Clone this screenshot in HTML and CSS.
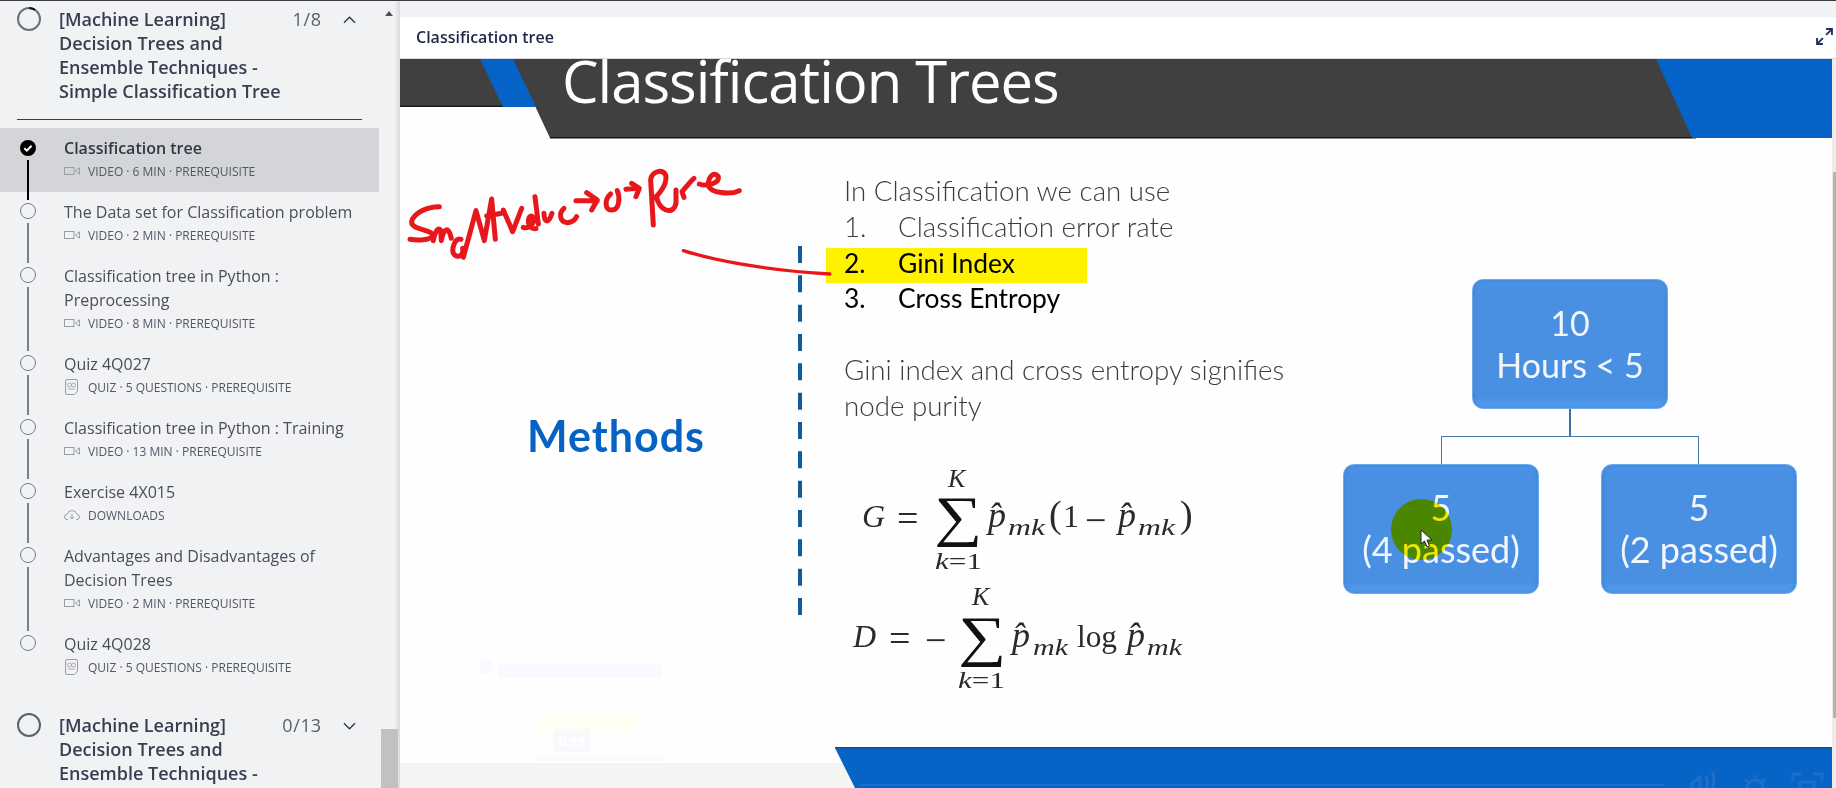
FILE: index.html
```html
<!DOCTYPE html>
<html lang="en">
<head>
<meta charset="utf-8">
<title>Classification tree</title>
<link rel="stylesheet" href="styles.css">
</head>
<body>
<div class="page">
  <aside class="sidebar">
    <div class="outline">
      <section class="module module-first">
        <header class="module-head">
          <svg class="ring" viewBox="0 0 24 24"><circle cx="12" cy="12" r="11" fill="none" stroke="#6d7080" stroke-width="2"/><path d="M12 1a11 11 0 0 1 6 1.8" fill="none" stroke="#111" stroke-width="2"/></svg>
          <h2 class="module-title">[Machine Learning] Decision Trees and Ensemble Techniques - Simple Classification Tree</h2>
          <span class="module-count">1 / 8</span>
          <svg class="chev" viewBox="0 0 14 8"><path d="M1 7l6-6 6 6" fill="none" stroke="#333645" stroke-width="1.4"/></svg>
        </header>
        <hr class="module-rule">
        <ul class="items">
          <li class="item item-active">
            <div class="marker"><svg class="dot-done" viewBox="0 0 16 16"><circle cx="8" cy="8" r="8" fill="#000"/><path d="M4.3 8.3l2.5 2.4 4.8-5" fill="none" stroke="#fff" stroke-width="2"/></svg><i class="rail rail-done"></i></div>
            <div class="body"><div class="name">Classification tree</div><div class="meta"><svg class="mi" viewBox="0 0 16 8"><use href="#i-video"/></svg><span>Video · 6 min · Prerequisite</span></div></div>
          </li>
          <li class="item">
            <div class="marker"><i class="dot"></i><i class="rail"></i></div>
            <div class="body"><div class="name">The Data set for Classification problem</div><div class="meta"><svg class="mi" viewBox="0 0 16 8"><use href="#i-video"/></svg><span>Video · 2 min · Prerequisite</span></div></div>
          </li>
          <li class="item">
            <div class="marker"><i class="dot"></i><i class="rail"></i></div>
            <div class="body"><div class="name">Classification tree in Python : Preprocessing</div><div class="meta"><svg class="mi" viewBox="0 0 16 8"><use href="#i-video"/></svg><span>Video · 8 min · Prerequisite</span></div></div>
          </li>
          <li class="item">
            <div class="marker"><i class="dot"></i><i class="rail"></i></div>
            <div class="body"><div class="name">Quiz 4Q027</div><div class="meta"><svg class="mi mi-quiz" viewBox="0 0 13 16"><use href="#i-quiz"/></svg><span>Quiz · 5 questions · Prerequisite</span></div></div>
          </li>
          <li class="item">
            <div class="marker"><i class="dot"></i><i class="rail"></i></div>
            <div class="body"><div class="name">Classification tree in Python : Training</div><div class="meta"><svg class="mi" viewBox="0 0 16 8"><use href="#i-video"/></svg><span>Video · 13 min · Prerequisite</span></div></div>
          </li>
          <li class="item">
            <div class="marker"><i class="dot"></i><i class="rail"></i></div>
            <div class="body"><div class="name">Exercise 4X015</div><div class="meta"><svg class="mi mi-cloud" viewBox="0 0 16 10"><use href="#i-cloud"/></svg><span>Downloads</span></div></div>
          </li>
          <li class="item">
            <div class="marker"><i class="dot"></i><i class="rail"></i></div>
            <div class="body"><div class="name">Advantages and Disadvantages of Decision Trees</div><div class="meta"><svg class="mi" viewBox="0 0 16 8"><use href="#i-video"/></svg><span>Video · 2 min · Prerequisite</span></div></div>
          </li>
          <li class="item">
            <div class="marker"><i class="dot"></i></div>
            <div class="body"><div class="name">Quiz 4Q028</div><div class="meta"><svg class="mi mi-quiz" viewBox="0 0 13 16"><use href="#i-quiz"/></svg><span>Quiz · 5 questions · Prerequisite</span></div></div>
          </li>
        </ul>
      </section>
      <section class="module">
        <header class="module-head">
          <svg class="ring" viewBox="0 0 24 24"><circle cx="12" cy="12" r="11" fill="none" stroke="#5c5f6e" stroke-width="2"/></svg>
          <h2 class="module-title">[Machine Learning] Decision Trees and Ensemble Techniques - Simple Classification Tree</h2>
          <span class="module-count">0 / 13</span>
          <svg class="chev" viewBox="0 0 14 8"><path d="M1 1l6 6 6-6" fill="none" stroke="#333645" stroke-width="1.4"/></svg>
        </header>
      </section>
    </div>
    <div class="scrollbar"><i class="scroll-up"></i><i class="scroll-thumb"></i></div>
  </aside>

  <main class="viewer">
    <header class="viewer-head">
      <span class="viewer-title">Classification tree</span>
      <svg class="expand" viewBox="0 0 16 16"><path d="M1 15l5.5-5.5M1 9.5V15h5.5" fill="none" stroke="#24305e" stroke-width="1.8"/><path d="M15 1L9.5 6.5M9.5 1H15v5.5" fill="none" stroke="#24305e" stroke-width="1.8"/></svg>
    </header>
    <div class="stage">
      <div class="slide">
        <svg class="art" viewBox="400 59 1432 729">
          <polygon points="400,59 1660,59 1696,138 550,138 535,106 400,106" fill="#404040"/>
          <rect x="400" y="105.500" width="103" height="1.500" fill="#1c1c1c"/>
          <rect x="550" y="137" width="1146" height="1.500" fill="#151515"/>
          <polygon points="480,59 513,59 536,107 503,107" fill="#0563c8"/>
          <polygon points="1656,59 1832,59 1832,138 1692,138" fill="#0563c8"/>
          <rect x="400" y="763" width="460" height="25" fill="#f4f4f2"/>
          <polygon points="835,748 1832,748 1832,788 855,788" fill="#0664c6"/>
          <rect x="835" y="747" width="997" height="1.500" fill="#0d4f9f"/>
          <rect x="860" y="784" width="805" height="2" fill="#1a6fca"/>
          <g fill="none" stroke="#1c70c9" stroke-width="3">
            <path d="M1692 788v-5l8-6v11M1706 776q3 6 0 12M1712 772q4 8 0 16"/>
            <circle cx="1755" cy="788" r="8"/>
            <path d="M1755 775v3M1745 779l3 3M1765 779l-3 3"/>
            <path d="M1793 781v-7h8M1813 774h9v7M1800 788v-6h14v6"/>
          </g>
          <rect x="498" y="664" width="164" height="14" fill="#f8faff"/>
          <rect x="480" y="660" width="12" height="14" fill="#f8faff"/>
          <rect x="537" y="716" width="99" height="15" fill="#fffff4"/>
          <rect x="553" y="729" width="37" height="23" fill="#f8f9fc"/>
          <rect x="537" y="756" width="125" height="5" fill="#f8faff"/>
          <text class="ghost" x="559" y="746">0:19</text>

          <rect x="826" y="248" width="261" height="35" fill="#fff200"/>
          <line class="dash" x1="800" y1="246" x2="800" y2="615"/>

          <g class="eq">
            <text x="862" y="527">G</text>
            <text class="rel" x="897" y="531">=</text>
            <text class="sum" x="934" y="535" textLength="48" lengthAdjust="spacingAndGlyphs">∑</text>
            <text class="lim lim-k" x="948" y="487">K</text>
            <text class="lim" x="935" y="569" textLength="47" lengthAdjust="spacingAndGlyphs">k<tspan class="up">=1</tspan></text>
            <text class="p" x="988" y="527">p̂</text>
            <text class="sub" x="1008" y="535" textLength="37" lengthAdjust="spacingAndGlyphs">mk</text>
            <text class="up big" x="1049" y="527">(</text>
            <text class="up" x="1063" y="527">1</text>
            <text class="rel" x="1085" y="533">−</text>
            <text class="p" x="1118" y="527">p̂</text>
            <text class="sub" x="1138" y="535" textLength="37" lengthAdjust="spacingAndGlyphs">mk</text>
            <text class="up big" x="1180" y="527">)</text>

            <text x="853" y="647">D</text>
            <text class="rel" x="889" y="651">=</text>
            <text class="rel" x="925" y="653">−</text>
            <text class="sum" x="958" y="655" textLength="48" lengthAdjust="spacingAndGlyphs">∑</text>
            <text class="lim lim-k" x="972" y="605">K</text>
            <text class="lim" x="958" y="688" textLength="47" lengthAdjust="spacingAndGlyphs">k<tspan class="up">=1</tspan></text>
            <text class="p" x="1012" y="647">p̂</text>
            <text class="sub" x="1033" y="655" textLength="35" lengthAdjust="spacingAndGlyphs">mk</text>
            <text class="up" x="1077" y="647" textLength="40" lengthAdjust="spacingAndGlyphs">log</text>
            <text class="p" x="1127" y="647">p̂</text>
            <text class="sub" x="1147" y="655" textLength="35" lengthAdjust="spacingAndGlyphs">mk</text>
          </g>

          <g class="ink" transform="translate(390 0) scale(.3333)">
            <path d="M148 620C110 620 70 640 65 665C62 690 125 688 128 705C125 722 80 722 60 718"/>
            <path d="M130 722C134 700 142 680 152 690L154 722C160 690 174 672 184 715"/>
            <path d="M213 718C195 712 185 745 190 760C200 775 222 770 218 745M220 772L258 632L283 722L305 597L316 718"/>
            <path d="M290 648L335 640M340 630L368 695L395 625"/>
            <path d="M400 682C420 690 442 660 425 648C410 648 410 690 438 686M435 590L445 672M462 640C462 665 475 675 486 640"/>
            <path d="M522 625C505 640 510 665 530 668C545 668 555 660 560 650"/>
            <path d="M558 602L622 602M590 578L622 600L605 630"/>
            <path d="M662 582C642 600 645 632 665 630C690 630 690 590 682 572"/>
            <path d="M708 568L745 565M725 550L748 565L738 590"/>
            <path d="M790 675L782 540C785 510 825 505 828 530C830 560 800 590 790 595"/>
            <path d="M800 590C805 630 850 650 858 610L858 570"/>
            <path d="M882 592L876 575C890 560 900 545 912 535"/>
            <path d="M928 552C950 560 990 550 985 530C975 515 955 525 955 555C960 580 1020 585 1048 572"/>
            <path class="ink-line" d="M880 752C1000 790 1180 815 1320 822"/>
          </g>
        </svg>

        <h1 class="slide-title">Classification Trees</h1>
        <div class="methods">Methods</div>

        <div class="points">
          <p>In Classification we can use</p>
          <p class="num"><span>1.</span><span>Classification error rate</span></p>
          <p class="num strong"><span>2.</span><span>Gini Index</span></p>
          <p class="num strong"><span>3.</span><span>Cross Entropy</span></p>
          <p class="spacer">&nbsp;</p>
          <p>Gini index and cross entropy signifies</p>
          <p>node purity</p>
        </div>

        <div class="tree">
          <div class="node node-top"><span>10</span><span>Hours &lt; 5</span></div>
          <i class="link link-stem"></i>
          <i class="link link-bar"></i>
          <div class="node node-left"><span>5</span><span>(4 passed)</span></div>
          <div class="node node-right"><span>5</span><span>(2 passed)</span></div>
          <i class="pointer-glow"></i>
          <svg class="pointer" viewBox="0 0 13 19"><path d="M1 1v14l3.500-3 2.500 6 2.500-1-2.500-6h5z" fill="#fff" stroke="#222" stroke-width="1"/></svg>
        </div>
      </div>
      <div class="page-scroll"><i></i></div>
    </div>
  </main>
</div>

<svg class="defs" aria-hidden="true">
  <symbol id="i-video" viewBox="0 0 16 8"><rect x=".5" y=".5" width="9.500" height="7" fill="none" stroke="#9a9ca8"/><path d="M15.500 .8L11.500 4l4 3.200z" fill="none" stroke="#9a9ca8"/></symbol>
  <symbol id="i-quiz" viewBox="0 0 13 16"><path d="M2 .5h9q1.500 0 1.500 1.500v10l-3 3.500H2q-1.500 0-1.500-1.500V2Q.5.500 2 .5z" fill="none" stroke="#9a9ca8"/><circle cx="4.500" cy="6" r="2" fill="none" stroke="#9a9ca8" stroke-width=".8"/><circle cx="8.500" cy="6" r="2" fill="none" stroke="#9a9ca8" stroke-width=".8"/><path d="M3 10h7" stroke="#9a9ca8" stroke-width=".8"/></symbol>
  <symbol id="i-cloud" viewBox="0 0 16 10"><path d="M4 9.500H3Q.5 9.500.5 7T3 4.500Q4 .5 8 .5t5 4q2.500.3 2.500 2.500T13 9.500h-1" fill="none" stroke="#9a9ca8"/><path d="M8 4v5M6 7l2 2 2-2" fill="none" stroke="#9a9ca8"/></symbol>
</svg>
</body>
</html>
```

FILE: styles.css
```css
* { box-sizing: border-box; }
html, body { margin: 0; height: 788px; overflow: hidden; }
body { background: #f1f2f4; font-family: "Open Sans", sans-serif; color: #373a45; }
h1, h2, p, ul { margin: 0; padding: 0; }
ul { list-style: none; }
i { display: block; }
.defs { position: absolute; width: 0; height: 0; }

.page { display: flex; height: 788px; border-top: 1px solid #3a3c42; }

/* sidebar */
.sidebar { display: flex; flex: 0 0 400px; height: 787px; overflow: hidden; }
.outline { flex: 0 0 379px; height: 787px; overflow: hidden; }
.module-head { display: flex; align-items: flex-start; padding: 6px 0 0 17px; }
.module + .module .module-head { padding-top: 25px; }
.ring { flex: none; width: 24px; height: 24px; }
.module-title { flex: none; width: 228px; margin-left: 18px; font-size: 18px; line-height: 24px; font-weight: 600; color: #3a3d4f; }
.module-count { flex: none; display: flex; justify-content: flex-end; width: 34px; font-size: 18px; line-height: 24px; color: #5a5d6b; white-space: pre; word-spacing: -4px; }
.chev { flex: none; width: 13px; height: 8px; margin: 9px 0 0 22px; }
.module-rule { margin: 16px 17px 8px 17px; height: 1px; border: 0; background: #3d3f4a; }

.item { display: flex; padding: 7px 0 9px 20px; }
.item-active { background: #d4d5d8; }
.marker { flex: none; display: flex; flex-direction: column; align-items: center; width: 16px; margin: 4px 0 -16px; }
.item-active .marker { margin-top: 5px; margin-bottom: -17px; }
.dot { flex: none; width: 16px; height: 16px; border: 1.5px solid #777988; border-radius: 50%; }
.dot-done { flex: none; width: 16px; height: 16px; }
.rail { flex: 1; width: 2px; margin-top: 4px; background: #7c7e8e; }
.rail-done { background: #000; }
.body { margin-left: 28px; min-width: 0; padding-top: 1px; }
.name { width: 300px; font-size: 16px; line-height: 24px; color: #4b4d5a; }
.item-active .name { font-weight: 600; color: #333745; }
.meta { display: flex; align-items: center; height: 24px; margin-top: -1px; font-size: 12px; text-transform: uppercase; color: #545664; }
.mi { flex: none; width: 16px; height: 8px; margin-right: 8px; }
.mi-quiz { width: 13px; height: 16px; margin: 0 10px 0 1px; }
.mi-cloud { height: 10px; }

.scrollbar { position: relative; flex: 0 0 21px; height: 787px; background: linear-gradient(90deg, #f1f2f4 15px, #dadada 21px); }
.scroll-up { position: absolute; left: 6px; top: 10px; width: 0; height: 0; border: 4.5px solid transparent; border-top: 0; border-bottom: 5px solid #505050; }
.scroll-thumb { position: absolute; left: 2px; width: 17px; bottom: 0; height: 59px; background: #c1c1c1; }

/* viewer */
.viewer { flex: 1; display: flex; flex-direction: column; min-width: 0; padding-top: 16px; }
.viewer-head { flex: 0 0 42px; display: flex; align-items: center; justify-content: space-between; padding: 0 3px 2px 16px; background: #fff; border-bottom: 1px solid #d8d9e0; }
.viewer-title { font-size: 16px; font-weight: 600; color: #1f2748; }
.expand { width: 17px; height: 17px; }
.stage { flex: 1; display: flex; min-height: 0; }
.slide { position: relative; flex: 1; overflow: hidden; background: #fefefe; }
.page-scroll { flex: 0 0 4px; padding-top: 113px; background: #ececec; }
.page-scroll i { width: 3px; height: 546px; margin-left: 1px; background: #b3b3b3; }

.art { position: absolute; left: 0; top: 0; width: 1432px; height: 729px; }
.dash { stroke: #0f5c9c; stroke-width: 4; stroke-dasharray: 17 12.330; }
.ghost { font: 700 13px "Open Sans", sans-serif; fill: #fff; }
.eq text { font-family: "Liberation Serif", serif; font-size: 32px; font-style: italic; fill: #2a2a2a; }
.eq .up { font-style: normal; }
.eq .big { font-size: 38px; }
.eq .rel { font-size: 38px; font-style: normal; }
.eq .p { font-size: 36px; }
.eq .sub { font-size: 23px; }
.eq .lim { font-size: 24px; }
.eq .lim-k { font-size: 26px; }
.eq .sum { font-size: 56px; font-style: normal; fill: #111; }
.ink path { fill: none; stroke: #e8171c; stroke-width: 15; stroke-linecap: round; stroke-linejoin: round; }
.ink .ink-line { stroke-width: 10; }

.slide-title { position: absolute; left: 162px; top: 0; font-family: "Open Sans", sans-serif; font-size: 58px; line-height: 44px; font-weight: 400; letter-spacing: -1px; color: #fff; white-space: nowrap; }
.methods { position: absolute; left: 127px; top: 352px; font-family: Lato, sans-serif; font-size: 43px; line-height: 50px; font-weight: 700; letter-spacing: 1px; color: #0663c4; }
.points { position: absolute; left: 444px; top: 114px; width: 460px; font-family: Lato, sans-serif; font-size: 27.700px; line-height: 35.750px; font-weight: 300; color: #3c3c3c; }
.num { display: grid; grid-template-columns: 54px 1fr; }
.strong { font-size: 26.400px; font-weight: 400; color: #000; transform: translateY(1px); }

.node { position: absolute; display: flex; flex-direction: column; align-items: center; justify-content: center; width: 196px; height: 130px; border: 1px solid #6ea9ee; border-radius: 11px; background: linear-gradient(180deg, #4a95ea 0, #4a90e2 10px, #4a90e2 117px, #52a0f6 100%); box-shadow: inset 0 0 5px #3f82d0; font-family: Lato, sans-serif; font-size: 34px; line-height: 42px; color: #f2f7fd; }
.node-top { left: 1072px; top: 220px; }
.node-left { left: 943px; top: 405px; padding-bottom: 2px; font-size: 36px; }
.node-right { left: 1201px; top: 405px; padding-bottom: 2px; font-size: 36px; }
.link { position: absolute; background: #3f6fa6; }
.link-stem { left: 1169px; top: 350px; width: 2px; height: 28px; }
.link-bar { left: 1041px; top: 377px; width: 258px; height: 28px; background: none; border: 1px solid #4d78aa; border-bottom: 0; }
.pointer-glow { position: absolute; left: 991px; top: 440px; width: 61px; height: 61px; border-radius: 50%; background: #ffee00; mix-blend-mode: multiply; }
.pointer { position: absolute; left: 1020px; top: 470px; width: 13px; height: 19px; }
```
